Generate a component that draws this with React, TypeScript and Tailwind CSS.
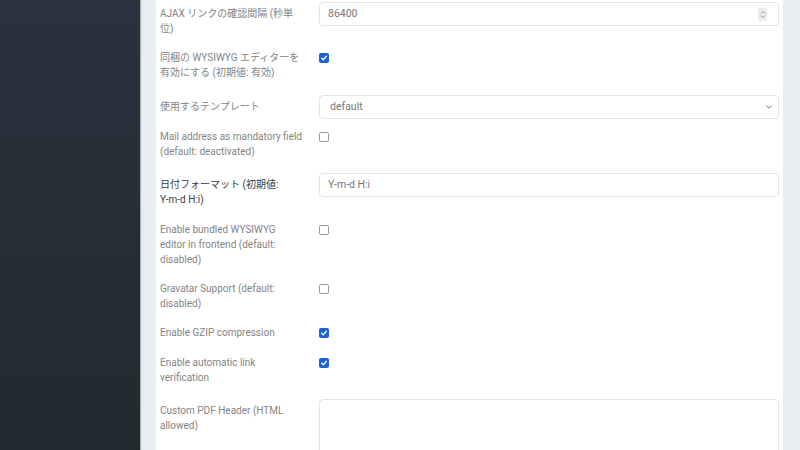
import { ChevronDown } from 'lucide-react';
import type { ReactNode } from 'react';

type Row =
  | { kind: 'text'; label: ReactNode; value: string; dark?: boolean; spinner?: boolean }
  | { kind: 'check'; label: ReactNode; checked: boolean }
  | { kind: 'select'; label: ReactNode; value: string }
  | { kind: 'area'; label: ReactNode };

const rows: Row[] = [
  { kind: 'text', label: 'AJAX リンクの確認間隔 (秒単位)', value: '86400', spinner: true },
  { kind: 'check', label: '同梱の WYSIWYG エディターを有効にする (初期値: 有効)', checked: true },
  { kind: 'select', label: '使用するテンプレート', value: 'default' },
  { kind: 'check', label: 'Mail address as mandatory field (default: deactivated)', checked: false },
  {
    kind: 'text',
    label: (
      <>
        日付フォーマット (初期値: <span className="whitespace-nowrap">Y-m-d</span> H:i)
      </>
    ),
    value: 'Y-m-d H:i',
    dark: true,
  },
  { kind: 'check', label: 'Enable bundled WYSIWYG editor in frontend (default: disabled)', checked: false },
  { kind: 'check', label: 'Gravatar Support (default: disabled)', checked: false },
  { kind: 'check', label: 'Enable GZIP compression', checked: true },
  { kind: 'check', label: 'Enable automatic link verification', checked: true },
  { kind: 'area', label: 'Custom PDF Header (HTML allowed)' },
];

function Checkbox({ checked }: { checked: boolean }) {
  if (checked) {
    return (
      <span className="mt-[3px] flex h-[10px] w-[10px] items-center justify-center rounded-[2px] bg-[#1e63d6]">
        <svg viewBox="0 0 10 10" className="h-[8px] w-[8px]">
          <path d="M2 5.2 L4.1 7.2 L8 2.8" fill="none" stroke="white" strokeWidth="1.6" strokeLinecap="round" strokeLinejoin="round" />
        </svg>
      </span>
    );
  }
  return <span className="mt-[3px] block h-[10px] w-[10px] rounded-[2px] border border-[#999] bg-white" />;
}

function Field({ row }: { row: Row }) {
  const inputBox = 'h-[24px] w-full rounded-[4px] border border-[#e2e5e9] bg-white text-[10.5px] text-[#777]';
  if (row.kind === 'check') return <Checkbox checked={row.checked} />;
  if (row.kind === 'select') {
    return (
      <div className={`${inputBox} flex items-center justify-between pl-[10px] pr-[4px]`}>
        <span>{row.value}</span>
        <ChevronDown className="h-[10px] w-[10px] text-[#555]" strokeWidth={2} />
      </div>
    );
  }
  if (row.kind === 'area') {
    return <div className="h-[80px] w-full rounded-[4px] border border-[#e2e5e9] bg-white" />;
  }
  return (
    <div className={`${inputBox} relative flex items-center pl-[8px]`}>
      <span>{row.value}</span>
      {row.spinner && (
        <span className="absolute right-[11px] top-[5px] flex h-[13px] w-[9px] items-center justify-center rounded-[2px] bg-[#ececec]">
          <svg viewBox="0 0 8 12" className="h-[9px] w-[6px]">
            <path d="M1.5 4.5 L4 2 L6.5 4.5 M1.5 7.5 L4 10 L6.5 7.5" fill="none" stroke="#777" strokeWidth="1" />
          </svg>
        </span>
      )}
    </div>
  );
}

export default function App() {
  return (
    <div
      className="flex h-[450px] w-[800px] overflow-hidden bg-[#e9ecf1]"
      style={{ fontFamily: 'Roboto, "Noto Sans CJK JP", sans-serif' }}
    >
      <aside className="h-full w-[140px] shrink-0 bg-gradient-to-b from-[#29333f] to-[#212a2e] shadow-[1px_0_1px_rgba(0,0,0,0.25)]" />
      <main className="ml-[16px] h-full w-[627px] bg-white pl-[4px] pr-[4px] pt-[2px]">
        {rows.map((row, i) => {
          const isCheck = row.kind === 'check';
          return (
            <div key={i} className="mb-[10.33px] flex items-start">
              <div
                className={`w-[159px] shrink-0 pr-[16px] pb-[4px] text-[10px] leading-[15px] ${
                  isCheck ? 'pt-0' : 'pt-[4px]'
                } ${row.kind === 'text' && row.dark ? 'text-[#3a3a3a]' : 'text-[#848484]'}`}
              >
                {row.label}
              </div>
              <div className="flex-1">
                <Field row={row} />
              </div>
            </div>
          );
        })}
      </main>
    </div>
  );
}
